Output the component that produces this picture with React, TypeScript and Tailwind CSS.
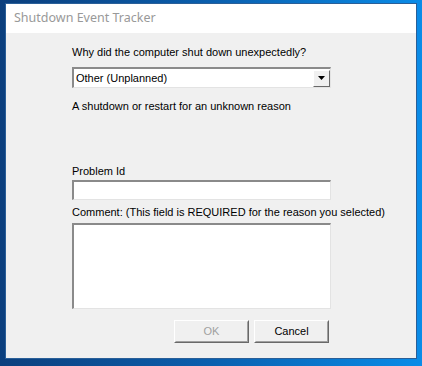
import React from "react";

const font = { fontFamily: '"Liberation Sans", Arial, sans-serif' };

function Sunken({ className }: { className: string }) {
  return (
    <div className={`border-t-2 border-l-2 border-b border-r border-t-[#8a8a8a] border-l-[#8a8a8a] border-b-[#e3e3e3] border-r-[#e3e3e3] bg-white ${className}`} />
  );
}

function Btn({ label, disabled }: { label: string; disabled?: boolean }) {
  return (
    <div className="w-[75px] h-[23px] border border-t-white border-l-white border-b-[#696969] border-r-[#696969] bg-[#f0f0f0]">
      <div className="w-full h-full border border-t-[#f0f0f0] border-l-[#f0f0f0] border-b-[#a0a0a0] border-r-[#a0a0a0] flex items-center justify-center">
        <span className={`text-[11px] leading-[13px] ${disabled ? "text-[#a0a0a0]" : "text-black"}`}>{label}</span>
      </div>
    </div>
  );
}

export default function App() {
  return (
    <div
      className="w-[422px] h-[366px] bg-gradient-to-r from-[#0b3f7d] via-[#0a5fae] to-[#0a8ce8] pt-[3px] pl-[5px] overflow-hidden"
      style={font}
    >
      <div className="w-[412px] h-[356px] border border-[#2a5f98] flex flex-col bg-[#f0f0f0]">
        <div className="h-[29px] bg-white flex items-center pl-[8px]">
          <span className="text-[12.5px] text-[#999999]" style={{ fontFamily: '"Noto Sans", "Open Sans", sans-serif' }}>
            Shutdown Event Tracker
          </span>
        </div>
        <div className="flex flex-col pl-[66px]">
          <div className="mt-[13px] h-[13px] text-[11px] leading-[13px] text-black">Why did the computer shut down unexpectedly?</div>
          <div className="mt-[8px] w-[259px] h-[21px] border-t-2 border-l-2 border-b border-r border-t-[#8a8a8a] border-l-[#8a8a8a] border-b-[#e3e3e3] border-r-[#e3e3e3] bg-white flex items-center justify-between">
            <span className="pl-[2px] text-[11px] leading-[13px] text-black">Other (Unplanned)</span>
            <div className="w-[17px] h-[17px] mr-[0px] border border-t-white border-l-white border-b-[#696969] border-r-[#696969] bg-[#f0f0f0] flex items-center justify-center">
              <svg width="7" height="4" viewBox="0 0 7 4">
                <path d="M0 0H7L3.5 4Z" fill="#000" />
              </svg>
            </div>
          </div>
          <div className="mt-[12px] h-[13px] text-[11px] leading-[13px] text-black">A shutdown or restart for an unknown reason</div>
          <div className="mt-[52px] h-[13px] text-[11px] leading-[13px] text-black">Problem Id</div>
          <Sunken className="mt-[2px] w-[259px] h-[20px]" />
          <div className="mt-[6px] h-[13px] text-[11px] leading-[13px] text-black">Comment: (This field is REQUIRED for the reason you selected)</div>
          <Sunken className="mt-[4px] w-[259px] h-[86px]" />
          <div className="mt-[11px] flex gap-[5px] pl-[102px]">
            <Btn label="OK" disabled />
            <Btn label="Cancel" />
          </div>
        </div>
      </div>
    </div>
  );
}
